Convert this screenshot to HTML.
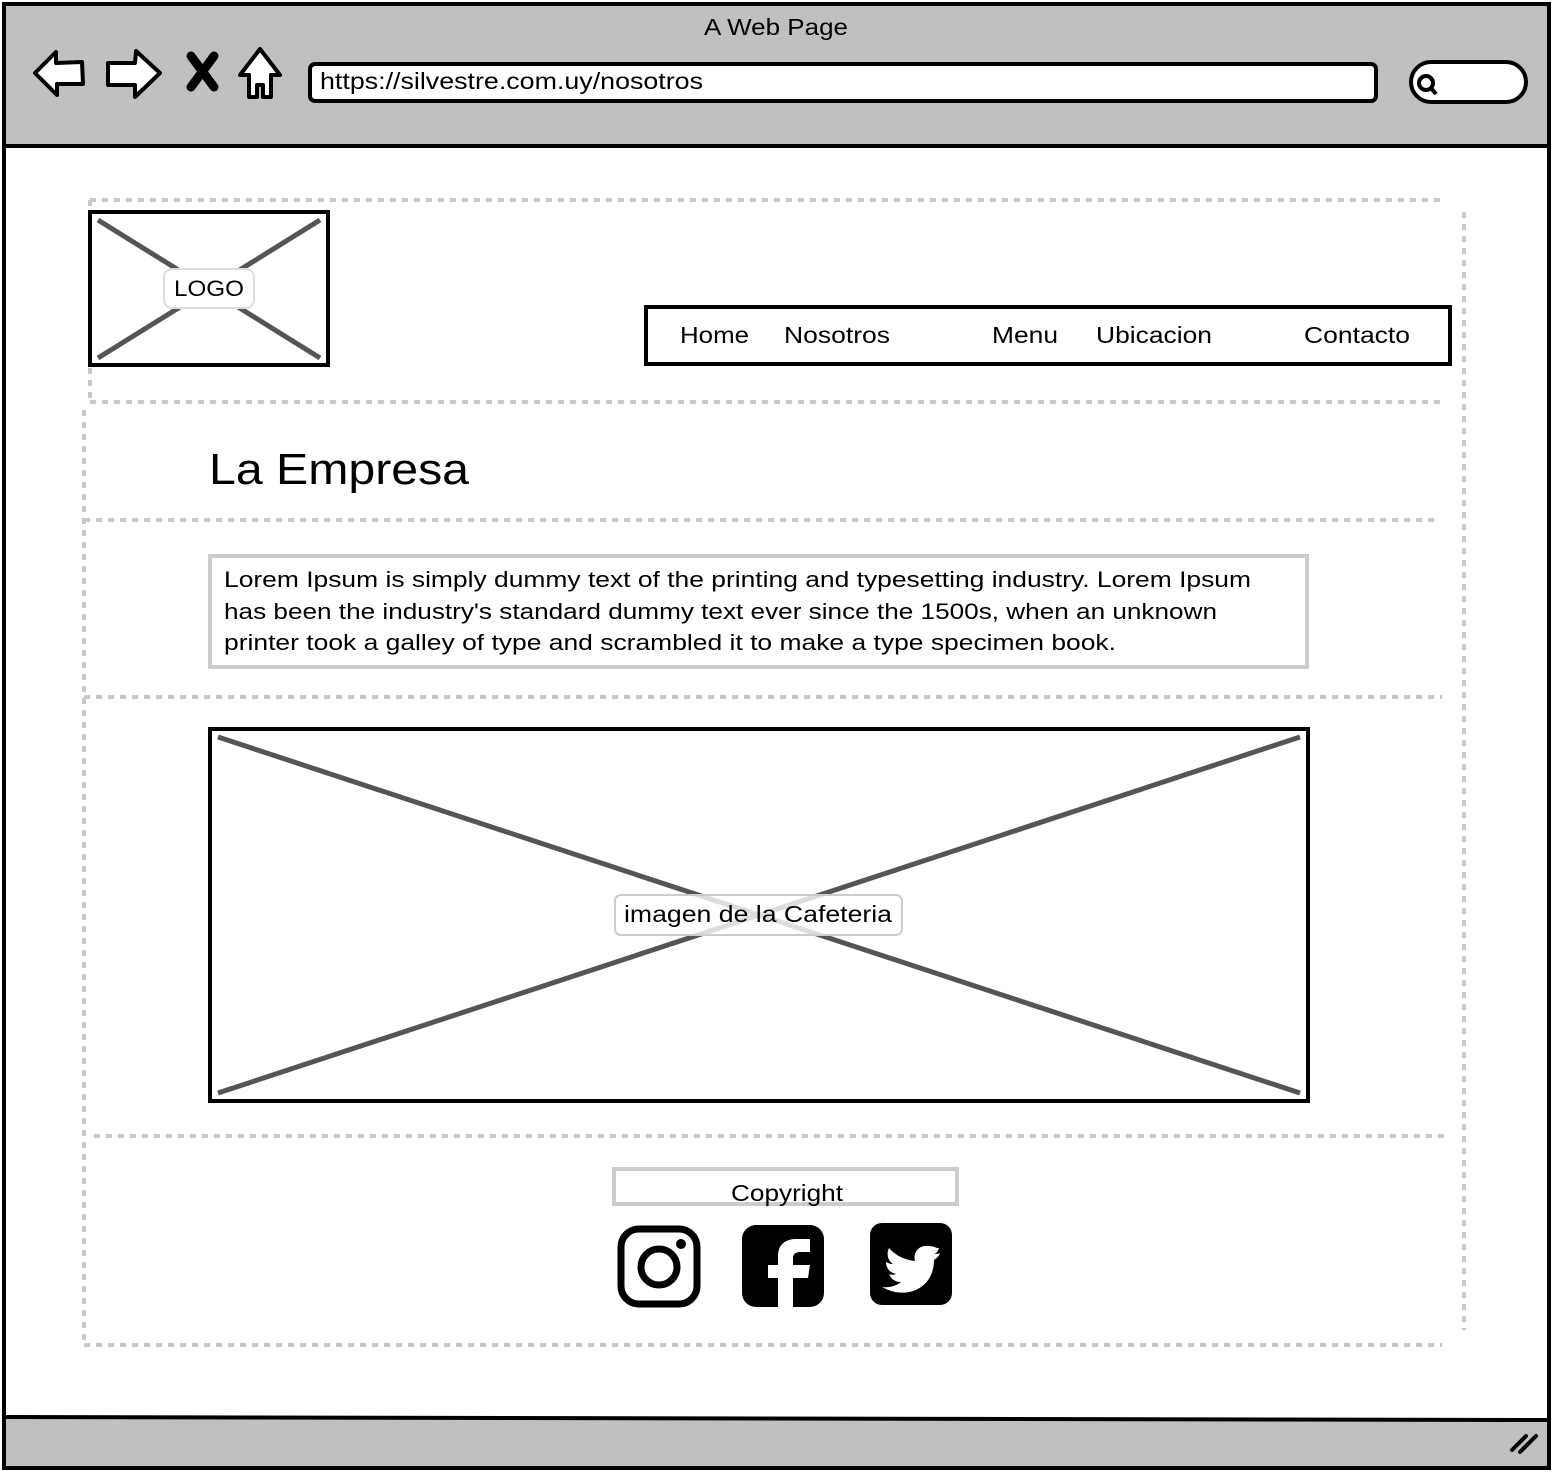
<!DOCTYPE html>
<html><head><meta charset="utf-8"><style>
html,body{margin:0;padding:0;background:#fff;}
svg{display:block;}
text{font-family:"Liberation Sans",sans-serif;}
</style></head><body>
<svg width="1554" height="1472" viewBox="0 0 1554 1472" xmlns="http://www.w3.org/2000/svg">
<rect x="0" y="0" width="1554" height="1472" fill="#fff"/>
<rect x="4" y="4" width="1545" height="142" fill="#c0c0c0"/>
<rect x="4" y="1418" width="1545" height="50" fill="#c0c0c0"/>
<rect x="4" y="4" width="1545" height="1464" fill="none" stroke="#000" stroke-width="4"/>
<line x1="4" y1="146" x2="1549" y2="146" stroke="#000" stroke-width="4"/>
<line x1="4" y1="1417" x2="1549" y2="1420" stroke="#000" stroke-width="4"/>
<text x="704" y="35" font-size="23" textLength="144" lengthAdjust="spacingAndGlyphs">A Web Page</text>
<path d="M35 73 L56 52 L56 63 L82 62 L83 84 L57 84 L57 95 Z" fill="#fff" stroke="#000" stroke-width="4" stroke-linejoin="round"/>
<path d="M160 73 L136 51 L135 63 L108 63 L108 85 L135 85 L135 97 Z" fill="#fff" stroke="#000" stroke-width="4" stroke-linejoin="round"/>
<path d="M191 56 L214 87 M214 56 L191 87" stroke="#000" stroke-width="9" stroke-linecap="round"/>
<path d="M260 49 L280 75 L271 75 L271 97 L263 97 L263 85 L257 85 L257 97 L249 97 L249 75 L240 75 Z" fill="#fff" stroke="#000" stroke-width="4" stroke-linejoin="round"/>
<rect x="310" y="64" width="1066" height="37" rx="5" fill="#fff" stroke="#000" stroke-width="4"/>
<text x="320" y="89" font-size="23" textLength="383" lengthAdjust="spacingAndGlyphs">https://silvestre.com.uy/nosotros</text>
<rect x="1411" y="62" width="115" height="40" rx="20" fill="#fff" stroke="#000" stroke-width="4"/>
<circle cx="1426" cy="83" r="7" fill="none" stroke="#000" stroke-width="4"/>
<line x1="1431" y1="88" x2="1436" y2="94" stroke="#000" stroke-width="4"/>
<path d="M1512 1450 L1526 1436 M1520 1452 L1536 1436" stroke="#000" stroke-width="4" stroke-linecap="round"/>
<g stroke="#c8c8c8" stroke-width="4" stroke-dasharray="6 6" fill="none">
<line x1="90" y1="200" x2="1440" y2="200"/>
<line x1="90" y1="200" x2="90" y2="400"/>
<line x1="1464" y1="212" x2="1464" y2="1330"/>
<line x1="90" y1="402" x2="1442" y2="402"/>
<line x1="84" y1="410" x2="84" y2="1345"/>
<line x1="84" y1="520" x2="1440" y2="520"/>
<line x1="84" y1="697" x2="1442" y2="697"/>
<line x1="94" y1="1136" x2="1450" y2="1136"/>
<line x1="84" y1="1345" x2="1442" y2="1345"/>
</g>
<rect x="90" y="212" width="238" height="153" fill="#fff" stroke="#000" stroke-width="4"/>
<path d="M98 220 L320 358 M320 220 L98 358" stroke="#555" stroke-width="5"/>
<rect x="164" y="269" width="90" height="39" rx="8" fill="#fff" stroke="#ddd" stroke-width="2"/>
<text x="174" y="296" font-size="22" textLength="70" lengthAdjust="spacingAndGlyphs">LOGO</text>
<rect x="646" y="307" width="804" height="57" fill="#fff" stroke="#000" stroke-width="4"/>
<g font-size="23">
<text x="680" y="343" textLength="69" lengthAdjust="spacingAndGlyphs">Home</text>
<text x="784" y="343" textLength="106" lengthAdjust="spacingAndGlyphs">Nosotros</text>
<text x="992" y="343" textLength="66" lengthAdjust="spacingAndGlyphs">Menu</text>
<text x="1096" y="343" textLength="116" lengthAdjust="spacingAndGlyphs">Ubicacion</text>
<text x="1304" y="343" textLength="106" lengthAdjust="spacingAndGlyphs">Contacto</text>
</g>
<text x="209" y="484" font-size="44" textLength="260" lengthAdjust="spacingAndGlyphs">La Empresa</text>
<rect x="210" y="556" width="1097" height="111" fill="#fff" stroke="#ccc" stroke-width="4"/>
<g font-size="22.5">
<text x="224" y="587" textLength="1027" lengthAdjust="spacingAndGlyphs">Lorem Ipsum is simply dummy text of the printing and typesetting industry. Lorem Ipsum</text>
<text x="224" y="619" textLength="993" lengthAdjust="spacingAndGlyphs">has been the industry's standard dummy text ever since the 1500s, when an unknown</text>
<text x="224" y="650" textLength="892" lengthAdjust="spacingAndGlyphs">printer took a galley of type and scrambled it to make a type specimen book.</text>
</g>
<rect x="210" y="729" width="1098" height="372" fill="#fff" stroke="#000" stroke-width="4"/>
<path d="M218 737 L1300 1093 M1300 737 L218 1093" stroke="#555" stroke-width="5"/>
<rect x="615" y="895" width="287" height="40" rx="6" fill="#fff" fill-opacity="0.8" stroke="#ccc" stroke-width="2"/>
<text x="624" y="922" font-size="23" textLength="268" lengthAdjust="spacingAndGlyphs">imagen de la Cafeteria</text>
<rect x="614" y="1169" width="343" height="35" fill="#fff" stroke="#ccc" stroke-width="4"/>
<text x="731" y="1201" font-size="23" textLength="112" lengthAdjust="spacingAndGlyphs">Copyright</text>
<rect x="621" y="1229" width="76" height="75" rx="18" fill="none" stroke="#000" stroke-width="7"/>
<circle cx="659" cy="1267" r="18" fill="none" stroke="#000" stroke-width="7"/>
<circle cx="681" cy="1244" r="5" fill="#000"/>
<rect x="742" y="1225" width="82" height="82" rx="14" fill="#000"/>
<path d="M778 1307 V1278 H768 V1265 H778 V1256 C778 1245 785 1239 796 1239 H810 V1252 H800 C796 1252 793 1254 793 1258 V1265 H810 L808 1278 H793 V1307 Z" fill="#fff"/>
<rect x="870" y="1223" width="82" height="82" rx="12" fill="#000"/>
<path d="M937 1248 C933 1246 930 1246 926 1246 C918 1246 913 1253 915 1261 C905 1260 896 1256 889 1248 C886 1254 888 1261 893 1264 C890 1264 888 1263 886 1262 C886 1268 890 1273 896 1274 C894 1275 891 1275 889 1274 C891 1279 895 1282 901 1282 C896 1286 889 1288 882 1287 C907 1301 934 1288 934 1260 C937 1258 939 1256 940 1253 C938 1254 936 1254 934 1254 C937 1253 938 1251 939 1248 Z" fill="#fff"/>
</svg>
</body></html>
